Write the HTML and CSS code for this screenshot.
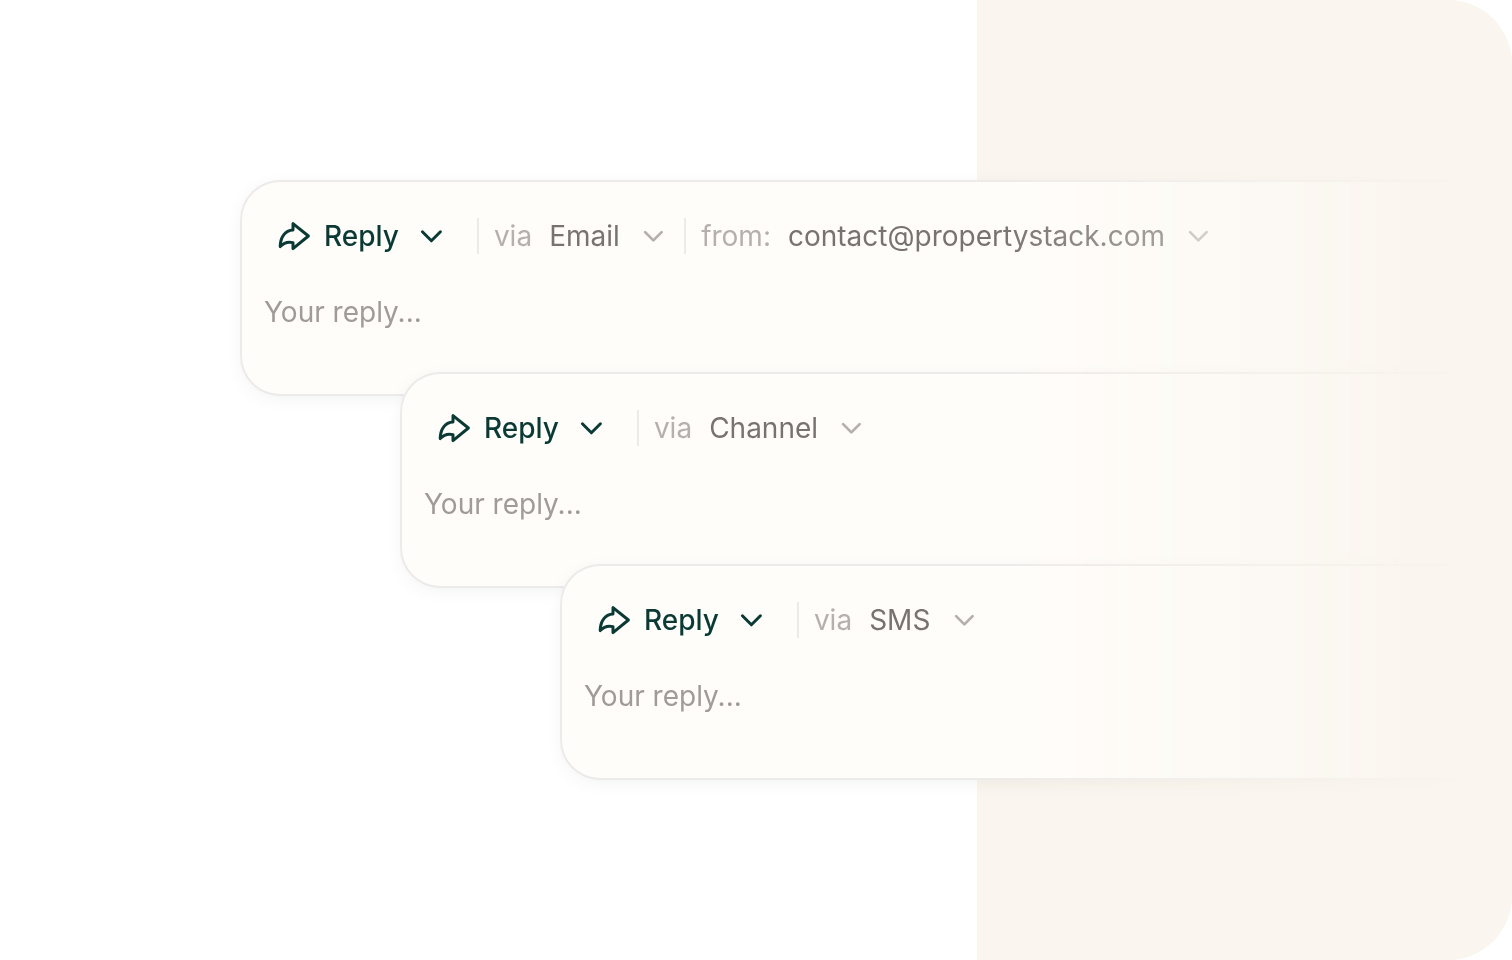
FILE: index.html
```html
<!DOCTYPE html>
<html lang="en">
<head>
  <meta charset="UTF-8" />
  <meta name="viewport" content="width=device-width, initial-scale=1.0" />
  <title>Reply from anywhere</title>
  <link rel="stylesheet" href="styles.css">
</head>
<body>
  <!-- Shared icons -->
  <svg class="icon-defs" width="0" height="0" aria-hidden="true">
    <symbol id="icon-share" viewBox="0 0 36 36">
      <path d="M17 5.6 L32.4 18 L17 30.6 V24.6 C11.5 23.2 7.5 25 4.2 28.6 C4.4 19 9 12.4 17 12 Z" />
    </symbol>
    <symbol id="icon-chevron" viewBox="0 0 24 24">
      <path d="M3.4 7.8 L12.4 16.8 L21.4 7.8" />
    </symbol>
  </svg>

  <main class="hero">
    <div class="panel"></div>

    <div class="card-stack">
      <section class="card card-email">
        <div class="card-header">
          <button class="reply-btn" type="button">
            <svg class="share"><use href="#icon-share" /></svg>
            Reply
            <svg class="chevron"><use href="#icon-chevron" /></svg>
          </button>
          <div class="field">
            <label for="via-email">via</label>
            <select id="via-email"><option>Email</option></select>
            <svg class="chevron"><use href="#icon-chevron" /></svg>
          </div>
          <div class="field">
            <label for="from-email">from:</label>
            <select id="from-email"><option>contact@propertystack.com</option></select>
            <svg class="chevron"><use href="#icon-chevron" /></svg>
          </div>
        </div>
        <textarea rows="1" placeholder="Your reply..." aria-label="Your email reply"></textarea>
      </section>

      <section class="card card-channel">
        <div class="card-header">
          <button class="reply-btn" type="button">
            <svg class="share"><use href="#icon-share" /></svg>
            Reply
            <svg class="chevron"><use href="#icon-chevron" /></svg>
          </button>
          <div class="field">
            <label for="via-channel">via</label>
            <select id="via-channel"><option>Channel</option></select>
            <svg class="chevron"><use href="#icon-chevron" /></svg>
          </div>
        </div>
        <textarea rows="1" placeholder="Your reply..." aria-label="Your channel reply"></textarea>
      </section>

      <section class="card card-sms">
        <div class="card-header">
          <button class="reply-btn" type="button">
            <svg class="share"><use href="#icon-share" /></svg>
            Reply
            <svg class="chevron"><use href="#icon-chevron" /></svg>
          </button>
          <div class="field">
            <label for="via-sms">via</label>
            <select id="via-sms"><option>SMS</option></select>
            <svg class="chevron"><use href="#icon-chevron" /></svg>
          </div>
        </div>
        <textarea rows="1" placeholder="Your reply..." aria-label="Your SMS reply"></textarea>
      </section>
    </div>
  </main>
</body>
</html>
```
FILE: styles.css
```css
* {
  box-sizing: border-box;
}
body {
  font-family: 'Inter', sans-serif;
  font-size: 28px;
  line-height: 36px;
  margin: 0;
  background-color: #ffffff;
  color: #78736f;
}
button, select, textarea {
  font: inherit;
  color: inherit;
  background: none;
  border: none;
  margin: 0;
  padding: 0;
}
svg {
  fill: none;
  stroke: currentColor;
  stroke-linecap: round;
  stroke-linejoin: round;
  flex-shrink: 0;
}
.icon-defs {
  display: block;
}

/* The panel and the cards share one grid row */
.hero {
  display: grid;
  grid-template-columns: 977fr 535fr;
  align-items: center;
  min-height: 100vh;
  overflow: hidden;
}
.panel {
  grid-area: 1 / 2;
  align-self: stretch;
  background: #faf5ee;
  border-radius: 0 64px 64px 0;
}
.card-stack {
  grid-area: 1 / 1 / 2 / 3;
  padding: 40px 0;
  -webkit-mask-image: linear-gradient(to right, #000 66%, transparent 98%);
  mask-image: linear-gradient(to right, #000 66%, transparent 98%);
}

.card {
  background: #fffdfa;
  border: 2px solid #edebe9;
  border-right: none;
  border-radius: 40px 0 0 40px;
  box-shadow: 0 4px 16px rgba(10, 50, 45, 0.05);
  padding: 36px 22px 62px;
}
.card + .card {
  margin-top: -24px;
}
.card-email {
  margin-left: 240px;
}
.card-channel {
  margin-left: 400px;
}
.card-sms {
  margin-left: 560px;
}

.card-header {
  display: flex;
  align-items: center;
  margin-bottom: 38px;
}
.reply-btn {
  display: flex;
  align-items: center;
  gap: 12px;
  padding: 0 34px 0 12px;
  color: #0b3a34;
  font-weight: 500;
  cursor: pointer;
}
.share {
  width: 36px;
  height: 36px;
  stroke-width: 3;
}
.chevron {
  width: 24px;
  height: 24px;
  stroke-width: 3;
}
.reply-btn .chevron {
  margin-left: 8px;
}
.field {
  display: flex;
  align-items: center;
  border-left: 2px solid #edebe9;
  padding: 0 20px 0 15px;
}
.field label {
  color: #b5b0ac;
  margin-right: 17px;
}
.field select {
  appearance: none;
  -webkit-appearance: none;
  cursor: pointer;
}
.field .chevron {
  width: 22px;
  height: 22px;
  color: #b5b0ac;
  margin-left: 22px;
}
textarea {
  display: block;
  width: 100%;
  height: 40px;
  line-height: 40px;
  resize: none;
  overflow: hidden;
}
textarea::placeholder {
  color: #a09b97;
  opacity: 1;
}
```
